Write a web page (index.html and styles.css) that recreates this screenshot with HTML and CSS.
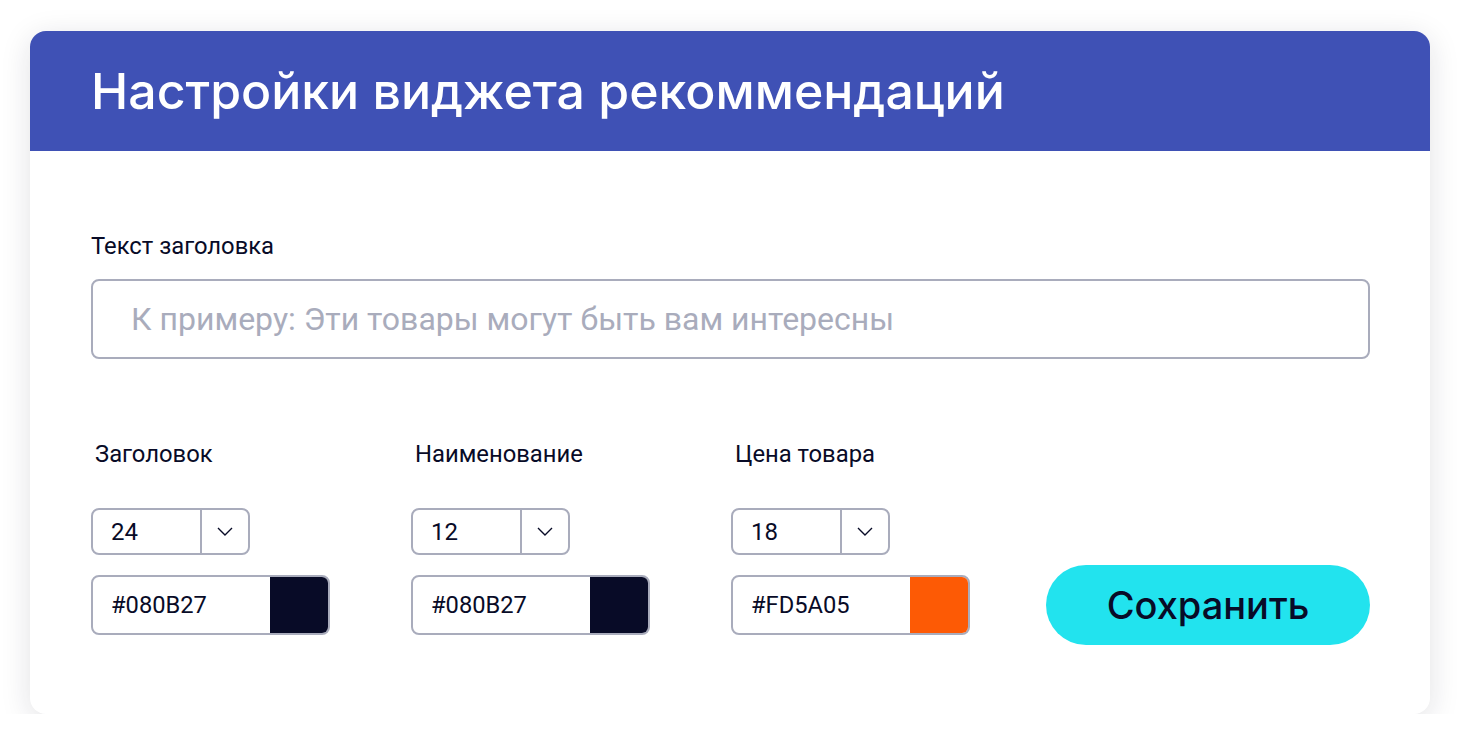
FILE: index.html
```html
<!DOCTYPE html>
<html lang="ru">
<head>
  <meta charset="UTF-8" />
  <meta name="viewport" content="width=device-width, initial-scale=1.0" />
  <title>Настройки виджета рекоммендаций</title>
  <link rel="stylesheet" href="styles.css">
</head>
<body>
  <div class="card">
    <div class="card-head">
      <h1>Настройки виджета рекоммендаций</h1>
    </div>

    <div class="card-body">
      <!-- Title text -->
      <label class="label" for="title-text">Текст заголовка</label>
      <input class="text-input" id="title-text" type="text" placeholder="К примеру: Эти товары могут быть вам интересны" />

      <!-- Font size + colour for every text block -->
      <div class="fields">
        <div class="field-label">Заголовок</div>
        <div class="field-label">Наименование</div>
        <div class="field-label">Цена товара</div>

        <div class="select">
          <span class="select-value">24</span>
          <span class="select-arrow">
            <svg width="16" height="9" viewBox="0 0 16 9"><path d="M1 1l7 7 7-7" fill="none" stroke="#080B27" stroke-width="1.4"/></svg>
          </span>
        </div>
        <div class="select">
          <span class="select-value">12</span>
          <span class="select-arrow">
            <svg width="16" height="9" viewBox="0 0 16 9"><path d="M1 1l7 7 7-7" fill="none" stroke="#080B27" stroke-width="1.4"/></svg>
          </span>
        </div>
        <div class="select">
          <span class="select-value">18</span>
          <span class="select-arrow">
            <svg width="16" height="9" viewBox="0 0 16 9"><path d="M1 1l7 7 7-7" fill="none" stroke="#080B27" stroke-width="1.4"/></svg>
          </span>
        </div>

        <div class="color">
          <span class="color-value">#080B27</span>
          <span class="swatch swatch-dark"></span>
        </div>
        <div class="color">
          <span class="color-value">#080B27</span>
          <span class="swatch swatch-dark"></span>
        </div>
        <div class="color">
          <span class="color-value">#FD5A05</span>
          <span class="swatch swatch-orange"></span>
        </div>

        <button class="save">Сохранить</button>
      </div>
    </div>
  </div>
</body>
</html>
```

FILE: styles.css
```css
body {
  margin: 0;
  padding: 31px 31px 0 30px;
  background: #fff;
  font-family: Roboto, "Liberation Sans", sans-serif;
  color: #080B27;
}
.card {
  width: 1400px;
  background: #fff;
  border-radius: 16px;
  overflow: hidden;
  box-shadow: 0 6px 30px rgba(20, 22, 50, 0.13);
}
.card-head {
  height: 120px;
  background: #3F51B5;
  display: flex;
  align-items: center;
  padding-left: 61px;
}
h1 {
  margin: 0;
  color: #fff;
  font-family: Inter, "Noto Sans", sans-serif;
  font-weight: 500;
  font-size: 50px;
}
.card-body {
  padding: 82px 60px 69px 61px;
}
.label {
  display: block;
  font-size: 23.8px;
  line-height: 26px;
  margin-bottom: 20px;
}
.text-input {
  display: block;
  box-sizing: border-box;
  width: 1279px;
  height: 80px;
  border: 2px solid #A9ACBC;
  border-radius: 8px;
  padding: 0 38px;
  font-family: Roboto, sans-serif;
  font-size: 32px;
  color: #080B27;
  outline: none;
}
.text-input::placeholder {
  color: #A9ACBC;
}
.fields {
  margin-top: 82px;
  display: grid;
  grid-template-columns: 320px 320px 315px 1fr;
  grid-template-rows: auto auto 80px;
}
.field-label {
  padding-left: 4px;
  font-size: 23.8px;
  line-height: 26px;
  margin-bottom: 41px;
}
.select {
  grid-row: 2;
  box-sizing: border-box;
  width: 159px;
  height: 47px;
  border: 2px solid #A9ACBC;
  border-radius: 8px;
  display: flex;
  margin-bottom: 10px;
}
.select-value {
  flex: 1;
  display: flex;
  align-items: center;
  padding-left: 18px;
  font-size: 24px;
}
.select-arrow {
  width: 46px;
  border-left: 2px solid #A9ACBC;
  display: flex;
  align-items: center;
  justify-content: center;
}
.color {
  grid-row: 3;
  align-self: center;
  box-sizing: border-box;
  width: 239px;
  height: 60px;
  border: 2px solid #A9ACBC;
  border-radius: 8px;
  overflow: hidden;
  display: flex;
}
.color-value {
  flex: 1;
  display: flex;
  align-items: center;
  padding-left: 18px;
  font-size: 23.7px;
}
.swatch {
  width: 58px;
}
.swatch-dark {
  background: #080B27;
}
.swatch-orange {
  background: #FD5A05;
}
.save {
  grid-row: 3;
  grid-column: 4;
  justify-self: end;
  width: 324px;
  height: 80px;
  border: none;
  border-radius: 40px;
  background: #22E3EE;
  color: #080B27;
  font-family: Inter, "Noto Sans", sans-serif;
  font-weight: 500;
  font-size: 38px;
  cursor: pointer;
}
```
